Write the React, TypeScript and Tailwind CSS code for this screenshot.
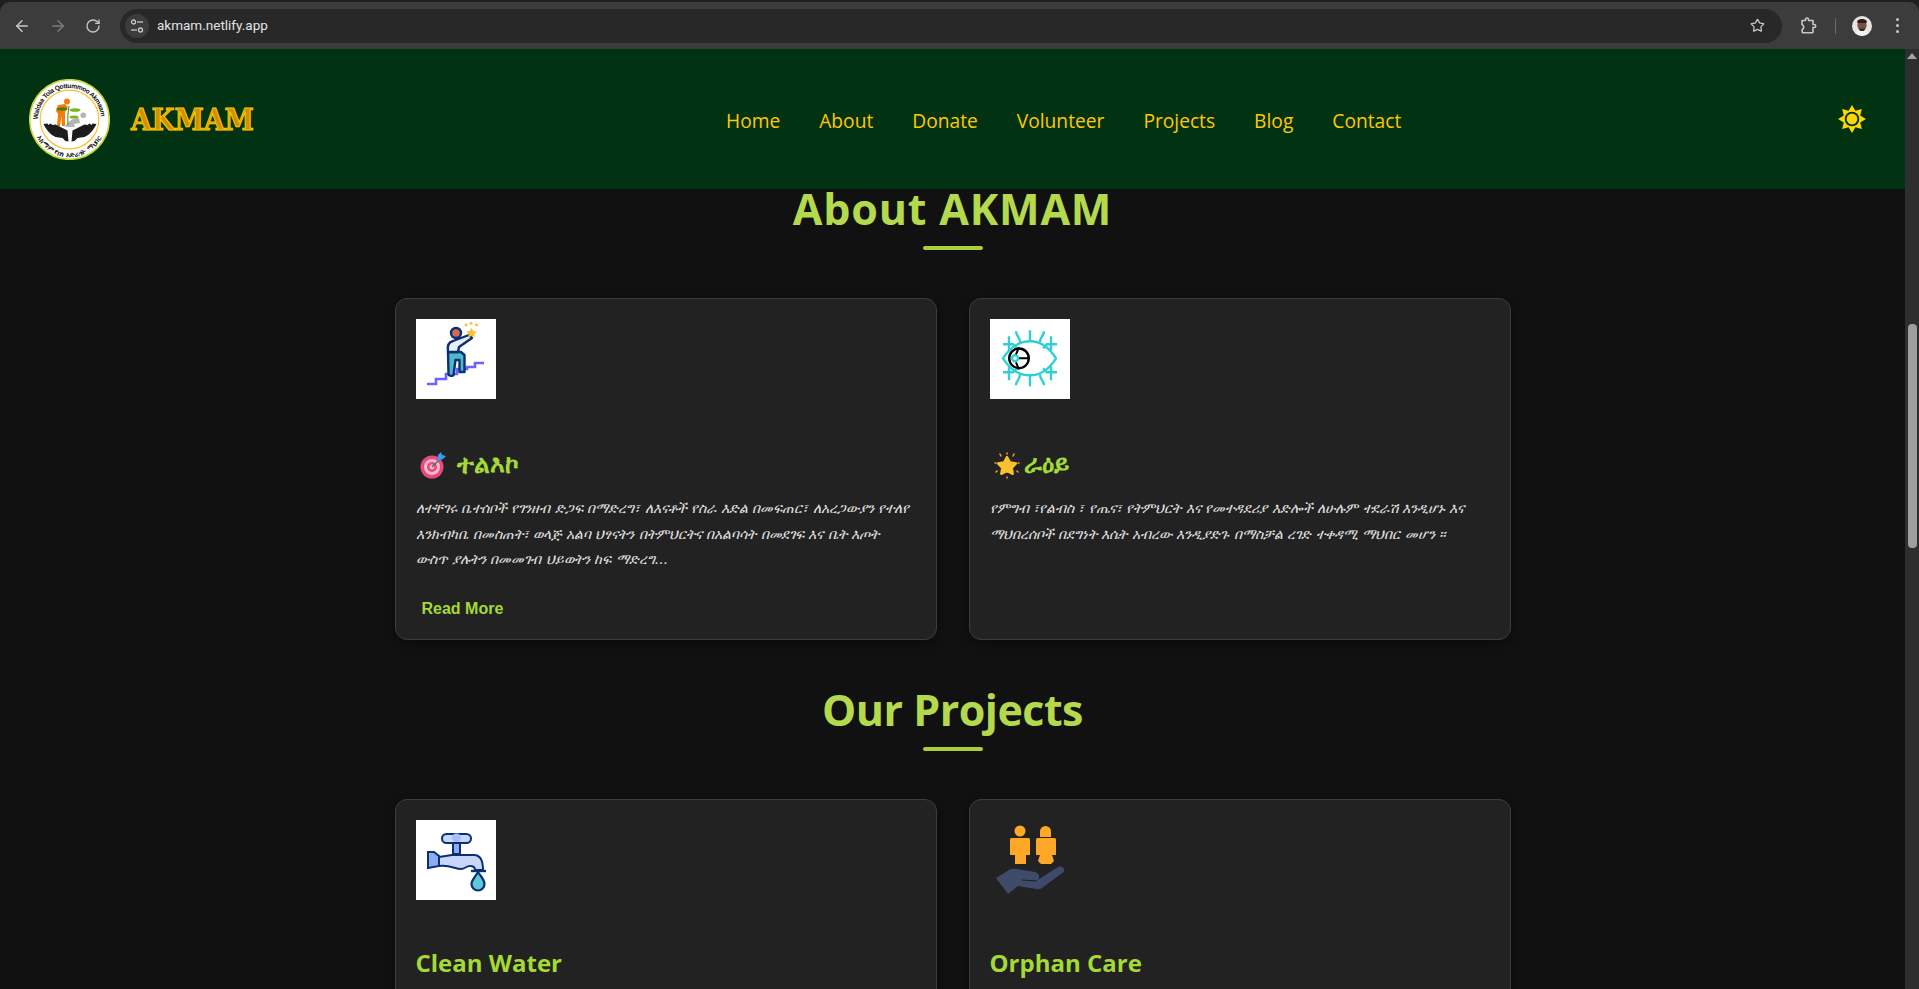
import React from 'react';
import { ArrowLeft, ArrowRight, RotateCw, Star } from 'lucide-react';

const NAV_LINKS = ['Home', 'About', 'Donate', 'Volunteer', 'Projects', 'Blog', 'Contact'];

function TuneIcon() {
  return (
    <svg width="14" height="14" viewBox="0 0 14 14" fill="none" stroke="#c7c7c7" strokeWidth="1.3">
      <circle cx="3.5" cy="3" r="2" />
      <path d="M7 3h6" />
      <circle cx="10.5" cy="11" r="2" />
      <path d="M1 11h6" />
    </svg>
  );
}

function ExtensionIcon() {
  return (
    <svg width="17" height="17" viewBox="0 0 17 17" fill="none" stroke="#c7c7c7" strokeWidth="1.6" strokeLinejoin="round" className="ml-[18px]">
      <path d="M2 3.500h3.500V2.500a1.500 1.500 0 0 1 3 0v1H13v4h1.200a1.500 1.500 0 0 1 0 3H13v4.500a.8.800 0 0 1-.8.800H3a.8.800 0 0 1-.8-.8v-2.500a2.500 2.500 0 0 0 1.500-2.500A2.800 2.800 0 0 0 2 7.500z" />
    </svg>
  );
}

function Avatar() {
  return (
    <svg width="20" height="20" viewBox="0 0 20 20">
      <clipPath id="avatar-clip">
        <circle cx="10" cy="10" r="10" />
      </clipPath>
      <g clipPath="url(#avatar-clip)">
        <rect width="20" height="20" fill="#e8e4e0" />
        <path d="M2 20c1-5 4-6 8-6s7 1 8 6z" fill="#f5f2f0" />
        <ellipse cx="10" cy="9" rx="4.6" ry="6" fill="#7a4f3e" />
        <path d="M5 6c0-4 10-4 10 0l-1 1H6z" fill="#2a1f1c" />
        <path d="M7 12.500h6l-1 2.500H8z" fill="#3a2a26" />
      </g>
    </svg>
  );
}

function BrowserBar() {
  return (
    <div className="h-[49px] shrink-0 bg-[#1f1f1f] pt-[2px]">
      <div className="flex h-[47px] items-center rounded-t-[10px] bg-[#3c3c3c] pl-[13px] pr-[13px]">
        <ArrowLeft className="h-[18px] w-[18px] text-[#c7c7c7]" strokeWidth={2} />
        <ArrowRight className="ml-[18px] h-[18px] w-[18px] text-[#7c7c7c]" strokeWidth={2} />
        <RotateCw className="ml-[18px] h-[16px] w-[16px] text-[#c7c7c7]" strokeWidth={2} />
        <div className="ml-[19px] flex h-[34px] w-[1662px] items-center rounded-full bg-[#282828] pl-[5px] pr-[17px]">
          <div className="flex h-[24px] w-[24px] items-center justify-center rounded-full bg-[#3c3c3c]">
            <TuneIcon />
          </div>
          <span className="ml-[8px] font-['Roboto',sans-serif] text-[13.5px] text-[#e3e3e3]">akmam.netlify.app</span>
          <Star className="ml-auto h-[15px] w-[15px] text-[#c7c7c7]" strokeWidth={2} />
        </div>
        <ExtensionIcon />
        <div className="ml-[18px] h-[16px] w-px bg-[#6a6a6a]" />
        <div className="ml-[16px] h-[20px] w-[20px]">
          <Avatar />
        </div>
        <div className="ml-[24px] flex flex-col gap-[3px]">
          <span className="h-[3px] w-[3px] rounded-full bg-[#c7c7c7]" />
          <span className="h-[3px] w-[3px] rounded-full bg-[#c7c7c7]" />
          <span className="h-[3px] w-[3px] rounded-full bg-[#c7c7c7]" />
        </div>
      </div>
    </div>
  );
}

function Logo() {
  return (
    <svg width="81" height="81" viewBox="0 0 81 81" className="shrink-0">
      <circle cx="40.500" cy="40.500" r="39.800" fill="#fff" stroke="#c3d93a" strokeWidth="1.600" />
      <circle cx="40.500" cy="40.500" r="29.300" fill="#fff" stroke="#fbc02d" strokeWidth="1.200" />
      <defs>
        <path id="logo-top" d="M9 40.500a31.500 31.500 0 0 1 63 0" />
        <path id="logo-bottom" d="M4.500 42a36 36 0 0 0 72 0" />
      </defs>
      <text fontFamily="'Liberation Sans',sans-serif" fontWeight="700" fontSize="6.600" fill="#111">
        <textPath href="#logo-top" textLength="96" lengthAdjust="spacing">Waldaa Tola Qottummoo Akmaam</textPath>
      </text>
      <text fontFamily="'DejaVu Sans',sans-serif" fontWeight="700" fontSize="6.800" fill="#111" textAnchor="middle">
        <textPath href="#logo-bottom" startOffset="50%">አክማም የበጎ አድራጎት ማህበር</textPath>
      </text>
      {/* gardener and helper */}
      <circle cx="54.300" cy="36.300" r="2.800" fill="#b5b5b5" />
      <path d="M36 48c2-5 7-9 14-9l1 5-6 1 1 3z" fill="#b5b5b5" />
      <circle cx="38" cy="22.500" r="3" fill="#f57c00" />
      <path d="M29 26l7-1 3 3-3 5v14h-3l-.500-10-1.500 10h-3l1-12-2-3z" fill="#f57c00" />
      <path d="M39 46c-.5-7 0-13 1-19" stroke="#4a7c12" strokeWidth="1" fill="none" />
      <ellipse cx="46" cy="31" rx="5.500" ry="1.800" fill="#7cb518" />
      <ellipse cx="33" cy="30" rx="5.500" ry="1.700" fill="#4a7c12" />
      <ellipse cx="45" cy="38" rx="4.500" ry="1.600" fill="#7cb518" />
      {/* hands */}
      <path d="M14.500 45l4-.5 1 1.500 2-1.500 2 1.500 3-.5 4 2 8 4 1 11-3-.5-3-3-7-1c-5-2-9-7-12-13z" fill="#1c1c1c" />
      <path d="M67.500 45l-4-.5-1 1.500-2-1.500-2 1.500-3-.5-4 2-8 4-1 11 3-.5 3-3 7-1c5-2 9-7 12-13z" fill="#1c1c1c" />
    </svg>
  );
}

function SunIcon() {
  return (
    <svg width="28" height="28" viewBox="0 0 28 28">
      <polygon
        fill="#ffd700"
        points="14,0 17.4,5.8 23.9,4.1 22.2,10.6 28,14 22.2,17.4 23.9,23.900 17.4,22.2 14,28 10.6,22.2 4.1,23.9 5.8,17.4 0,14 5.8,10.6 4.1,4.1 10.6,5.8"
      />
      <circle cx="14" cy="14" r="7.300" fill="#013212" />
      <circle cx="14" cy="14" r="5.400" fill="#ffd700" />
    </svg>
  );
}

function Header() {
  return (
    <header className="relative z-10 flex h-[140px] shrink-0 items-center bg-[#013212] pl-[29px] pr-[39px]">
      <Logo />
      <span className="ml-[21px] mt-[3px] inline-block w-[122px] origin-center scale-y-[1.12] font-['DejaVu_Serif',serif] text-[26.5px] font-bold leading-none text-[#d09000] [-webkit-text-stroke:1px_#ffc800]">
        AKMAM
      </span>
      <nav className="ml-[473px] flex items-center gap-[39px] pt-[4px] font-['Open_Sans',sans-serif] text-[19.2px] text-[#ffc800]">
        {NAV_LINKS.map((link) => (
          <a key={link}>{link}</a>
        ))}
      </nav>
      <div className="ml-auto">
        <SunIcon />
      </div>
    </header>
  );
}

function ClimberIcon() {
  return (
    <svg viewBox="0 0 80 80" className="h-full w-full">
      <path d="M11 65h9v-5h10v-5h11v-5h10v-2h8v-4h9" fill="none" stroke="#6c63ff" strokeWidth="2.600" />
      <path d="M32 33h13l3.500 3v17h-5V41h-4l-2 15c-1 1.500-5 1-5-1z" fill="#4fb8c9" stroke="#0b2f74" strokeWidth="2.400" strokeLinejoin="round" />
      <path d="M32 33c-1-6 1-10 5-11l16-6 3 3-13 9-1 5z" fill="#e9ecfb" stroke="#0b2f74" strokeWidth="2.400" strokeLinejoin="round" />
      <circle cx="40" cy="14" r="5" fill="#d8694a" stroke="#0b2f74" strokeWidth="2.400" />
      <path d="M55.500 9l1.800 3 3.400.600-2.400 2.500.5 3.400-3.300-1.500-3.300 1.500.5-3.400-2.400-2.500 3.400-.6z" fill="#fbc02d" />
      <circle cx="50" cy="6" r="1.400" fill="#fbc02d" />
      <circle cx="55" cy="4.300" r="1.400" fill="#fbc02d" />
      <circle cx="60.500" cy="6" r="1.400" fill="#fbc02d" />
    </svg>
  );
}

function EyeIcon() {
  return (
    <svg viewBox="0 0 80 80" fill="none" className="h-full w-full">
      <g transform="translate(-1 -1.700)">
        <path d="M14 41c7-11 16-17 27-17s19 6 26 17c-7 11-15 17-26 17s-20-6-27-17z" stroke="#2fd0d4" strokeWidth="2.400" />
        <g stroke="#2fd0d4" strokeWidth="2.400">
          <path d="M41 13v11M27 14c0 5 4 5 4 11M55 14c0 5-4 5-4 11M41 58v11M27 68c0-5 4-5 4-11M55 68c0-5-4-5-4-11" />
          <path d="M20 19v14M14 27h10l4 4M62 19v14M68 27H58l-4 4M20 49v14M14 55h10l4-4M62 49v14M68 55H58l-4-4" />
        </g>
        <circle cx="26" cy="41" r="3" stroke="#2fd0d4" strokeWidth="2.400" />
        <circle cx="30" cy="41" r="9.800" stroke="#000" strokeWidth="2.400" />
        <path d="M30 41h10M27 37l3-7M27 45l3 7" stroke="#000" strokeWidth="2" />
      </g>
    </svg>
  );
}

function TapIcon() {
  return (
    <svg viewBox="0 0 80 80" className="h-full w-full">
      <rect x="26" y="14" width="29" height="9" rx="4.500" fill="#c9d6fb" stroke="#0b2f74" strokeWidth="2" />
      <circle cx="40.500" cy="18" r="4.500" fill="#a9bdf5" />
      <rect x="37" y="23" width="7" height="11" fill="#8cabf0" stroke="#0b2f74" strokeWidth="2" />
      <path d="M23 37l13-2h22c6 0 9 6 9 15H59c0-3-2-4-5-4-4 0-5 3-9 3-6 0-10-4-22-3z" fill="#c9d6fb" stroke="#0b2f74" strokeWidth="2" />
      <path d="M12 32h6l5 4v10l-11 2z" fill="#8cabf0" stroke="#0b2f74" strokeWidth="2" />
      <path d="M55 51h15" stroke="#0b2f74" strokeWidth="2.400" />
      <path d="M62 52c4 6 6.500 8 6.500 12a6.500 6.500 0 0 1-13 0c0-4 3-6 6.500-12z" fill="#5fc9d6" stroke="#0b2f74" strokeWidth="2.200" />
    </svg>
  );
}

function OrphanIcon() {
  return (
    <svg viewBox="0 0 80 80" className="h-full w-full">
      <g fill="#ffa726">
        <circle cx="30" cy="11" r="5.500" />
        <path d="M21.500 18h17a1.500 1.500 0 0 1 1.500 1.500V35h-4v9H25v-9h-5V19.500a1.500 1.500 0 0 1 1.500-1.500z" />
        <path d="M50 11.500a5.500 5.500 0 0 1 11 0V17H50z" />
        <path d="M46.500 18h18a1.500 1.500 0 0 1 1.500 1.500V35h-4l2 6-3 3h-10l-3-3 2-6h-4V19.500a1.500 1.500 0 0 1 1.500-1.500z" />
      </g>
      <path
        d="M6 58L19 50Q22 48 27 49L45 52Q50 54 49 58Q48 61 43 60L32 60L46 61L68 47Q72 45 74 49Q75 52 72 53L52 68Q50 70 46 69L28 66L18 74Z"
        fill="#3f4a6b"
      />
      <path d="M32 60l14 1" stroke="#222" strokeWidth="1" />
    </svg>
  );
}

function TargetEmoji() {
  return (
    <svg width="26" height="27" viewBox="0 0 26 27" className="shrink-0">
      <circle cx="12" cy="15" r="11.500" fill="#e84a7f" />
      <circle cx="12" cy="15" r="8" fill="#f5b8cc" />
      <circle cx="12" cy="15" r="5" fill="#e84a7f" />
      <circle cx="12" cy="15" r="2.400" fill="#f5b8cc" />
      <path d="M12 15l9-9" stroke="#5b6b7a" strokeWidth="1.400" />
      <path d="M17 9l1-6 3-3 1 3 4 1-3 3-6 2z" fill="#3b9be8" />
    </svg>
  );
}

function StarEmoji() {
  return (
    <svg width="26" height="27" viewBox="0 0 26 27" className="shrink-0">
      <path d="M13 5l3 5.500 6 1-4.300 4.300 1 6L13 19l-5.700 2.800 1-6L4 11.500l6-1z" fill="#fbc02d" stroke="#fbc02d" strokeWidth="2.400" strokeLinejoin="round" />
      <g stroke="#e0a030" strokeWidth="1.600" strokeLinecap="round">
        <path d="M6 2l1 2M20 2l-1 2M13 1v1M1 11h1M25 11h-1M2 20l1-1M24 20l-1-1M13 25v1" />
      </g>
    </svg>
  );
}

function SectionHeading({ title, tracking }: { title: string; tracking: string }) {
  return (
    <div className="flex flex-col items-center">
      <h2 className={`h-[54px] font-['Open_Sans',sans-serif] text-[43px] font-bold leading-[54px] text-[#b5d94c] ${tracking}`}>
        {title}
      </h2>
      <div className="mt-[10px] h-[4px] w-[60px] rounded-full bg-[#a8cf38]" />
    </div>
  );
}

function Card({ children, image, plain }: { children: React.ReactNode; image: React.ReactNode; plain?: boolean }) {
  return (
    <div className="flex flex-col rounded-[12px] border border-[#3d3d3d] bg-[#222222] p-5 shadow-[0_4px_12px_rgba(0,0,0,0.4)]">
      <div className={plain ? 'h-[80px] w-[80px]' : 'h-[80px] w-[80px] bg-white'}>{image}</div>
      {children}
    </div>
  );
}

const bodyClass = "mt-[13px] font-['DejaVu_Sans',sans-serif] text-[14px] italic leading-[25.6px] text-[#e0e0e0]";
const titleClass = "mt-[48px] flex h-[36px] items-center font-['DejaVu_Sans',sans-serif] text-[25px] font-bold text-[#a4d936]";
const projectTitleClass = "mt-[45px] h-[36px] font-['Open_Sans',sans-serif] text-[24px] font-bold leading-[36px] text-[#a4d936]";

export default function App() {
  return (
    <div className="flex h-[989px] w-full flex-col overflow-hidden bg-[#111111]">
      <BrowserBar />
      <div className="flex min-h-0 flex-1">
        <div className="min-w-0 flex-1">
          <Header />
          <main className="mx-auto -mt-[7px] w-[1116px]">
            <SectionHeading title="About AKMAM" tracking="tracking-[0.8px]" />
            <div className="mt-[48px] grid grid-cols-2 gap-8">
              <Card image={<ClimberIcon />}>
                <h3 className={titleClass}>
                  <span className="ml-[4px] flex items-center"><TargetEmoji /></span>
                  <span className="ml-[11px]">ተልእኮ</span>
                </h3>
                <p className={bodyClass}>
                  ለተቸገሩ ቤተሰቦች የገንዘብ ድጋፍ በማድረግ፣ ለእናቶች የስራ እድል በመፍጠር፣ ለአረጋውያን የተለየ እንክብካቤ በመስጠት፣ ወላጅ አልባ ህፃናትን በትምህርትና በአልባሳት በመደገፍ እና ቤት እጦት
                  <br />
                  ውስጥ ያሉትን በመመገብ ህይወትን ከፍ ማድረግ...
                </p>
                <button className="mt-[26px] h-[20px] w-fit px-[6px] font-['Liberation_Sans',sans-serif] text-[16px] font-bold leading-[20px] text-[#a4d936]">
                  Read More
                </button>
              </Card>
              <Card image={<EyeIcon />}>
                <h3 className={titleClass}>
                  <span className="ml-[4px] flex items-center"><StarEmoji /></span>
                  <span className="ml-[4px]">ራዕይ</span>
                </h3>
                <p className={bodyClass}>
                  የምግብ ፣የልብስ ፣ የጤና፣ የትምህርት እና የመተዳደሪያ እድሎች ለሁሉም ተደራሽ እንዲሆኑ እና ማህበረሰቦች በደግነት እሴት አብረው  እንዲያድጉ በማስቻል ረገድ ተቀዳሚ ማህበር መሆን ።
                </p>
              </Card>
            </div>
            <div className="mt-[43px]">
              <SectionHeading title="Our Projects" tracking="tracking-[-0.5px]" />
            </div>
            <div className="mt-[48px] grid grid-cols-2 gap-8">
              <Card image={<TapIcon />}>
                <h3 className={projectTitleClass}>Clean Water</h3>
                <div className="h-[160px]" />
              </Card>
              <Card image={<OrphanIcon />} plain>
                <h3 className={projectTitleClass}>Orphan Care</h3>
                <div className="h-[160px]" />
              </Card>
            </div>
          </main>
        </div>
        {/* page scrollbar */}
        <div className="flex w-[14px] shrink-0 flex-col items-center bg-[#2e2e2e] pt-[4px]">
          <div className="h-0 w-0 border-x-[5px] border-b-[6px] border-x-transparent border-b-[#a3a3a3]" />
          <div className="mt-[265px] h-[224px] w-[9px] rounded-[4px] bg-[#9f9f9f]" />
        </div>
      </div>
    </div>
  );
}
